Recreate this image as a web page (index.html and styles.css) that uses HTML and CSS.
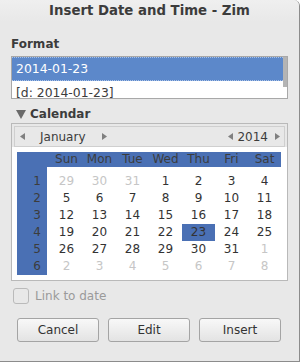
FILE: index.html
```html
<!DOCTYPE html>
<html lang="en">
<head>
  <meta charset="UTF-8" />
  <title>Insert Date and Time - Zim</title>
  <link rel="stylesheet" href="styles.css">
</head>
<body>

<div class="window">
  <div class="titlebar">Insert Date and Time - Zim</div>

  <div class="content">
    <div class="label">Format</div>

    <div class="list">
      <div class="rows">
        <div class="row selected">2014-01-23</div>
        <div class="row">[d: 2014-01-23]</div>
      </div>
      <div class="scrollbar"><div class="thumb"></div></div>
    </div>

    <div class="expander">
      <svg class="exp-arrow" width="10" height="9" viewBox="0 0 10 9"><polygon points="0,0 10,0 5,9" fill="#6a6a6a"/></svg>
      <span>Calendar</span>
    </div>

    <div class="frame">
      <div class="nav-wrap">
        <div class="nav">
          <svg class="nav-arrow" width="5" height="7" viewBox="0 0 5 7"><polygon points="5,0 5,7 0,3.5" fill="#808080"/></svg>
          <span class="month">January</span>
          <svg class="nav-arrow after-month" width="5" height="7" viewBox="0 0 5 7"><polygon points="0,0 0,7 5,3.5" fill="#808080"/></svg>
          <span class="spacer"></span>
          <svg class="nav-arrow" width="5" height="7" viewBox="0 0 5 7"><polygon points="5,0 5,7 0,3.5" fill="#808080"/></svg>
          <span class="year">2014</span>
          <svg class="nav-arrow after-year" width="5" height="7" viewBox="0 0 5 7"><polygon points="0,0 0,7 5,3.5" fill="#808080"/></svg>
        </div>
      </div>

      <div class="cal">
        <div class="cal-head">
          <span class="corner"></span>
          <span>Sun</span><span>Mon</span><span>Tue</span><span>Wed</span><span>Thu</span><span>Fri</span><span>Sat</span>
        </div>
        <div class="cal-body">
          <div class="weeks">
            <span>1</span><span>2</span><span>3</span><span>4</span><span>5</span><span>6</span>
          </div>
          <div class="days">
            <span class="other">29</span><span class="other">30</span><span class="other">31</span><span>1</span><span>2</span><span>3</span><span>4</span>
            <span>5</span><span>6</span><span>7</span><span>8</span><span>9</span><span>10</span><span>11</span>
            <span>12</span><span>13</span><span>14</span><span>15</span><span>16</span><span>17</span><span>18</span>
            <span>19</span><span>20</span><span>21</span><span>22</span><span class="today">23</span><span>24</span><span>25</span>
            <span>26</span><span>27</span><span>28</span><span>29</span><span>30</span><span>31</span><span class="other">1</span>
            <span class="other">2</span><span class="other">3</span><span class="other">4</span><span class="other">5</span><span class="other">6</span><span class="other">7</span><span class="other">8</span>
          </div>
        </div>
      </div>
    </div>

    <label class="check">
      <span class="box"></span>
      <span>Link to date</span>
    </label>

    <div class="buttons">
      <button>Cancel</button>
      <button>Edit</button>
      <button>Insert</button>
    </div>
  </div>
</div>

</body>
</html>
```

FILE: styles.css
```css
body {
  margin: 0;
  background: #ffffff;
  font-family: "DejaVu Sans", sans-serif;
  font-size: 12px;
  color: #3c3c3c;
}

.window {
  width: 299px;
  height: 361px;
  background: #e8e8e8;
  border-right: 1px solid #8c8c8c;
  border-bottom: 1px solid #8c8c8c;
  border-top-right-radius: 6px;
  overflow: hidden;
}

.titlebar {
  height: 22px;
  line-height: 22px;
  text-align: center;
  font-weight: bold;
  font-size: 13.3px;
  background: linear-gradient(#efefef, #e8e8e8);
}

.content {
  padding: 0 11px;
}

.label {
  margin-top: 14px;
  line-height: 16px;
  font-weight: bold;
}

/* format list */
.list {
  display: flex;
  margin-top: 4px;
  height: 41px;
  border: 1px solid #a8a8a8;
  background: #ffffff;
  overflow: hidden;
  font-size: 12.4px;
}

.rows {
  flex: 1;
}

.row {
  height: 24px;
  line-height: 24px;
  padding-left: 4px;
}

.row.selected {
  background: #5c88ca;
  color: #ffffff;
  height: 22px;
  line-height: 22px;
  border-top: 1px dotted #a9c2e8;
  border-bottom: 1px dotted #a9c2e8;
}

.scrollbar {
  width: 4px;
}

.thumb {
  height: 30px;
  background: #b4b4b4;
}

.expander {
  display: flex;
  align-items: center;
  margin-top: 7px;
  height: 16px;
  font-weight: bold;
}

.exp-arrow {
  margin: 0 4px 0 5px;
}

/* calendar */
.frame {
  margin-top: 1px;
  border: 1px solid #b9b9b9;
}

.nav-wrap {
  padding: 2px 2px 0;
}

.nav {
  display: flex;
  align-items: center;
  height: 19px;
  border: 1px solid #cfcfcf;
  padding: 0 4px 0 5px;
}

.month {
  margin-left: 15px;
}

.after-month {
  margin-left: 16px;
}

.spacer {
  flex: 1;
}

.year {
  margin-left: 4px;
}

.after-year {
  margin-left: 7px;
}

.cal {
  background: #ffffff;
  padding: 5px 5px 5px 5px;
}

.cal-head {
  display: flex;
  height: 15px;
  line-height: 15px;
  background: #4a70b4;
  width: 264px;
}

.cal-head span {
  width: 33px;
  text-align: center;
}

.cal-body {
  display: flex;
}

.weeks {
  width: 30px;
  background: #4a70b4;
  padding-top: 6px;
}

.weeks span {
  display: block;
  height: 17px;
  line-height: 17px;
  text-align: right;
  padding-right: 6px;
}

.days {
  display: grid;
  grid-template-columns: repeat(7, 33px);
  grid-auto-rows: 17px;
  padding: 6px 0 0 3px;
}

.days span {
  text-align: center;
  line-height: 17px;
  color: #333333;
}

.days span.other {
  color: #c6c6c6;
}

.days span.today {
  background: #4a70b4;
}

/* bottom */
.check {
  display: flex;
  align-items: center;
  margin-top: 7px;
  color: #9a9a9a;
}

.box {
  width: 14px;
  height: 14px;
  margin: 0 6px 0 2px;
  border: 1px solid #bababa;
  border-radius: 3px;
}

.buttons {
  display: flex;
  gap: 9px;
  margin: 14px 0 0 6px;
}

button {
  width: 82px;
  height: 24px;
  font-family: "DejaVu Sans", sans-serif;
  font-size: 12px;
  color: #333333;
  background: linear-gradient(#f8f8f8, #e3e3e3);
  border: 1px solid #a4a4a4;
  border-radius: 3px;
  padding: 0;
}
```
